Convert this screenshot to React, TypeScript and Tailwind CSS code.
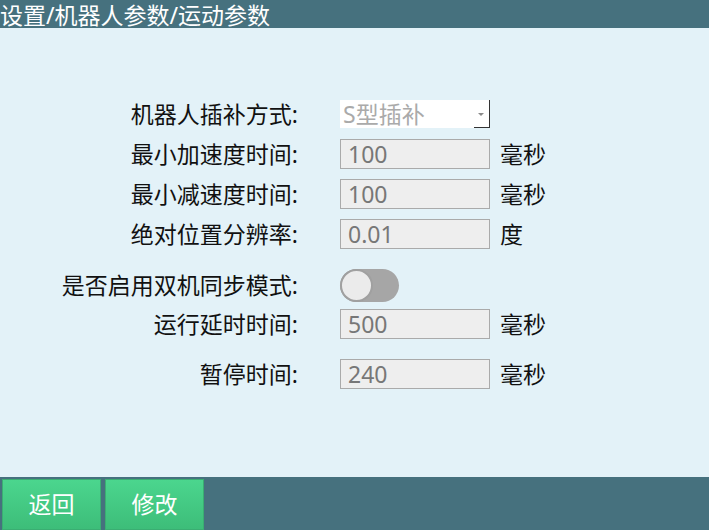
import React from 'react';

const font = { fontFamily: '"Noto Sans", "Noto Sans CJK SC", sans-serif' };

const Label: React.FC<{ text: string }> = ({ text }) => (
    <div className="w-[298px] shrink-0 text-right text-[23px] leading-none text-[#111]">{text}:</div>
);

const NumberRow: React.FC<{ label: string; value: string; unit: string; className?: string }> = ({ label, value, unit, className }) => (
    <div className={`flex items-center h-[30px] ${className ?? ''}`}>
        <Label text={label} />
        <div className="ml-[42px] w-[150px] h-[30px] bg-[#eeeeee] border border-[#aaaaaa] flex items-center pl-[7px] text-[23px] text-[#777777] leading-none">
            {value}
        </div>
        <div className="ml-[10px] text-[23px] text-[#111] leading-none">{unit}</div>
    </div>
);

const App: React.FC = () => {
    return (
        <div className="w-[709px] h-[530px] flex flex-col bg-[#e3f2f8] overflow-hidden" style={font}>
            {/* Breadcrumb header */}
            <div className="h-[28px] bg-[#46717e] flex items-end">
                <span className="text-white text-[23px] leading-[26px]">设置/机器人参数/运动参数</span>
            </div>

            {/* Parameter form */}
            <div className="flex-1 flex flex-col pt-[72px]">
                <div className="flex items-center h-[28px]">
                    <Label text="机器人插补方式" />
                    <div className="ml-[42px] w-[150px] h-[28px] bg-white relative flex items-center pl-[3px] text-[23px] text-[#aaaaaa] leading-none">
                        S型插补
                        <div className="absolute right-0 top-0 h-full w-[1px] bg-[#333]"></div>
                        <div className="absolute right-0 bottom-0 w-[16px] h-[1px] bg-[#333]"></div>
                        <div className="absolute right-[6px] top-[13px] w-0 h-0 border-l-[3px] border-r-[3px] border-t-[3px] border-l-transparent border-r-transparent border-t-[#8a8a8a]"></div>
                    </div>
                </div>

                <NumberRow label="最小加速度时间" value="100" unit="毫秒" className="mt-[11px]" />
                <NumberRow label="最小减速度时间" value="100" unit="毫秒" className="mt-[10px]" />
                <NumberRow label="绝对位置分辨率" value="0.01" unit="度" className="mt-[10px]" />

                <div className="flex items-center h-[33px] mt-[20px]">
                    <Label text="是否启用双机同步模式" />
                    <div className="ml-[42px] w-[59px] h-[33px] rounded-full bg-[#a6a6a6] flex items-center">
                        <div className="w-[33px] h-[33px] rounded-full bg-[#ebebeb] border-2 border-[#a0a0a0]"></div>
                    </div>
                </div>

                <NumberRow label="运行延时时间" value="500" unit="毫秒" className="mt-[7px]" />
                <NumberRow label="暂停时间" value="240" unit="毫秒" className="mt-[20px]" />
            </div>

            {/* Bottom action bar */}
            <div className="h-[53px] bg-[#46717e] flex items-end pl-[2px] gap-[4px]">
                <button className="w-[99px] h-[51px] bg-gradient-to-b from-[#4bd68e] to-[#3dbd79] border border-[#3aae72] text-white text-[23px]">
                    返回
                </button>
                <button className="w-[99px] h-[51px] bg-gradient-to-b from-[#4bd68e] to-[#3dbd79] border border-[#3aae72] text-white text-[23px]">
                    修改
                </button>
            </div>
        </div>
    );
};

export default App;
